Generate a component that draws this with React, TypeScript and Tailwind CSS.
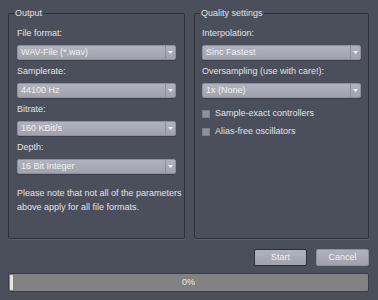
import React from "react";

// Combo box: flat grey field with a split-off arrow section on the right
function Combo({ value }: { value: string }) {
  return (
    <div className="flex h-[15px] items-stretch rounded-[2px] border border-[#8d909b] bg-gradient-to-b from-[#b0b3be] to-[#a0a3ae] shadow-[0_1px_0_#3d4049]">
      <div className="flex flex-1 items-center pl-[3px] text-[#f2f2f2]">{value}</div>
      <div className="flex w-[10px] items-center justify-center border-l border-[#8b8e99]">
        <svg width="5" height="3" viewBox="0 0 5 3">
          <path d="M0 0 L5 0 L2.5 3 Z" fill="#f4f4f4" />
        </svg>
      </div>
    </div>
  );
}

function Label({ children, className = "" }: { children: React.ReactNode; className?: string }) {
  return <div className={`h-[11px] leading-[11px] text-[#e2e3e6] ${className}`}>{children}</div>;
}

function Check({ label, className = "" }: { label: string; className?: string }) {
  return (
    <div className={`flex h-[11px] items-center ${className}`}>
      <span className="h-[8px] w-[8px] border border-[#7d808a] bg-[#8e919a]" />
      <span className="ml-[5px] leading-[11px] text-[#e2e3e6]">{label}</span>
    </div>
  );
}

export default function App() {
  return (
    <div
      className="flex h-[300px] w-[378px] flex-col bg-[#4b4f5c] px-[8px] pt-[8px] text-[9px]"
      style={{ fontFamily: '"Liberation Sans", Arial, sans-serif' }}
    >
      <div className="flex h-[231px] gap-[9px] pr-[1px]">
        <fieldset className="w-[177px] min-w-0 shrink-0 rounded-[2px] border border-[#2e3139] px-[8px] shadow-[0_1px_0_#5b5f6b]">
          <legend className="ml-[-3px] px-[1px] leading-[10px] text-[#e2e3e6]">Output</legend>
          <div className="flex flex-col pt-[10px]">
            <Label>File format:</Label>
            <div className="mt-[6px]"><Combo value="WAV-File (*.wav)" /></div>
            <Label className="mt-[6px]">Samplerate:</Label>
            <div className="mt-[6px]"><Combo value="44100 Hz" /></div>
            <Label className="mt-[6px]">Bitrate:</Label>
            <div className="mt-[6px]"><Combo value="160 KBit/s" /></div>
            <Label className="mt-[6px]">Depth:</Label>
            <div className="mt-[6px]"><Combo value="16 Bit Integer" /></div>
            <p className="mr-[-6px] mt-[12px] leading-[14px] text-[#e2e3e6]">
              Please note that not all of the parameters
              <br />
              above apply for all file formats.
            </p>
          </div>
        </fieldset>

        <fieldset className="min-w-0 flex-1 rounded-[2px] border border-[#2e3139] px-[7px] shadow-[0_1px_0_#5b5f6b]">
          <legend className="ml-[-2px] px-[1px] leading-[10px] text-[#e2e3e6]">Quality settings</legend>
          <div className="flex flex-col pt-[10px]">
            <Label>Interpolation:</Label>
            <div className="mt-[6px]"><Combo value="Sinc Fastest" /></div>
            <Label className="mt-[6px]">Oversampling (use with care!):</Label>
            <div className="mt-[6px]"><Combo value="1x (None)" /></div>
            <Check className="mt-[10px]" label="Sample-exact controllers" />
            <Check className="mt-[7px]" label="Alias-free oscillators" />
          </div>
        </fieldset>
      </div>

      <div className="mt-[10px] flex justify-end gap-[9px] pr-[1px]">
        <button
          type="button"
          className="h-[17px] w-[53px] rounded-[2px] border border-[#2a2d35] bg-gradient-to-b from-[#b0b3be] to-[#9fa2ad] text-[9px] text-[#eeeeee]"
        >
          Start
        </button>
        <button
          type="button"
          className="h-[17px] w-[53px] rounded-[2px] border border-[#8d909b] bg-gradient-to-b from-[#b0b3be] to-[#9fa2ad] text-[9px] text-[#eeeeee]"
        >
          Cancel
        </button>
      </div>

      <div className="relative mr-[1px] mt-[7px] flex h-[19px] items-center justify-center rounded-[2px] border border-[#3b3e46] bg-[#828282]">
        <div className="absolute bottom-[1px] left-[1px] top-[1px] w-[3px] rounded-[1px] bg-[#e6e6e6]" />
        <span className="text-[#ececec]">0%</span>
      </div>
    </div>
  );
}
